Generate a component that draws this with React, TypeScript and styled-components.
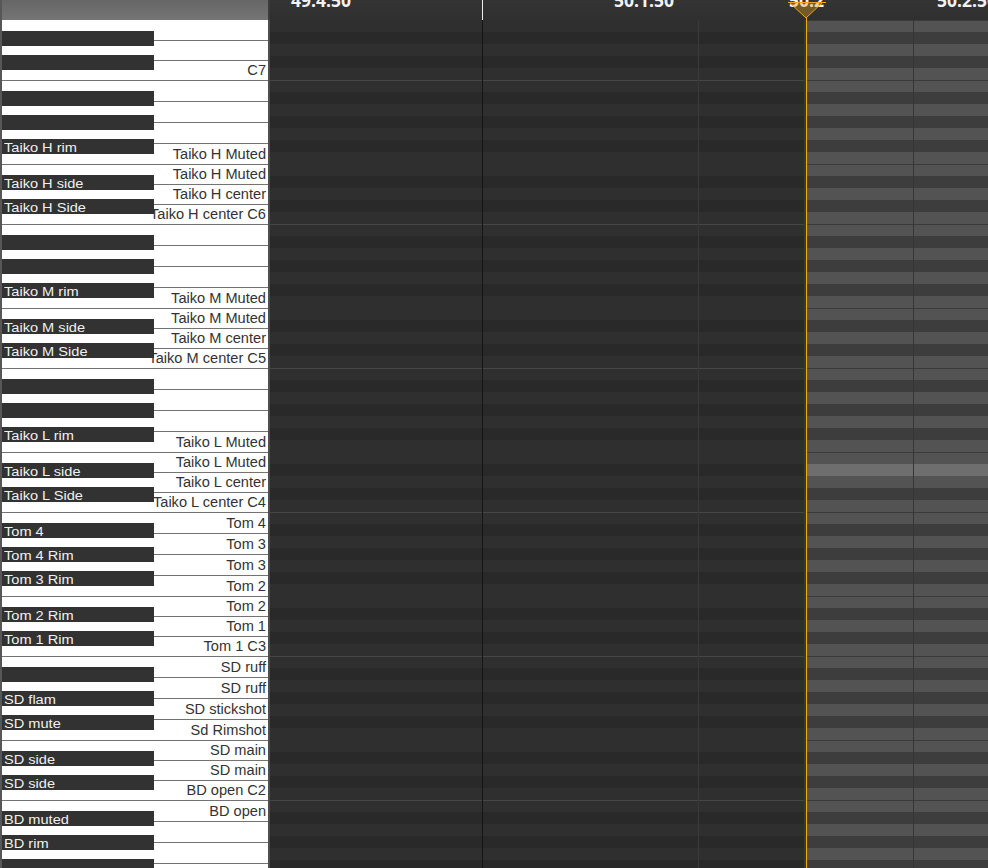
import React from 'react';
import styled, { createGlobalStyle } from 'styled-components';

const GlobalStyle = createGlobalStyle`
  html, body { margin: 0; padding: 0; background: #2d2d2d; overflow: hidden; }
  #root { width: 988px; height: 868px; }
`;

const TOP_NOTE = 100; // E7
const LOWEST_NOTE = 29; // F1
const ROW_COUNT = 71;
const BLACK_PCS = new Set([1, 3, 6, 8, 10]);
const isBlack = (n: number) => BLACK_PCS.has(n % 12);
const WHITE_HEIGHTS: Record<number, number> = { 11: 21, 9: 21, 7: 21, 5: 21, 4: 20, 2: 20, 0: 20 };
const HIGHLIGHT_NOTE = 63;

const LABELS: Record<number, string> = {
  96: 'C7',
  90: 'Taiko H rim', 89: 'Taiko H Muted', 88: 'Taiko H Muted', 87: 'Taiko H side',
  86: 'Taiko H center', 85: 'Taiko H Side', 84: 'Taiko H center C6',
  78: 'Taiko M rim', 77: 'Taiko M Muted', 76: 'Taiko M Muted', 75: 'Taiko M side',
  74: 'Taiko M center', 73: 'Taiko M Side', 72: 'Taiko M center C5',
  66: 'Taiko L rim', 65: 'Taiko L Muted', 64: 'Taiko L Muted', 63: 'Taiko L side',
  62: 'Taiko L center', 61: 'Taiko L Side', 60: 'Taiko L center C4',
  59: 'Tom 4', 58: 'Tom 4', 57: 'Tom 3', 56: 'Tom 4 Rim', 55: 'Tom 3', 54: 'Tom 3 Rim',
  53: 'Tom 2', 52: 'Tom 2', 51: 'Tom 2 Rim', 50: 'Tom 1', 49: 'Tom 1 Rim', 48: 'Tom 1 C3',
  47: 'SD ruff', 45: 'SD ruff', 44: 'SD flam', 43: 'SD stickshot', 42: 'SD mute',
  41: 'Sd Rimshot', 40: 'SD main', 39: 'SD side', 38: 'SD main', 37: 'SD side', 36: 'BD open C2',
  35: 'BD open', 34: 'BD muted', 32: 'BD rim',
};

const RULER_LABELS = [
  { x: 21, text: '49.4.50' },
  { x: 344, text: '50.1.50' },
  { x: 519, text: '50.2' },
  { x: 667, text: '50.2.50' },
];

const Root = styled.div`
  width: 988px;
  height: 868px;
  overflow: hidden;
  display: grid;
  grid-template-columns: 270px 1fr;
  grid-template-rows: 20px 1fr;
  background: #2d2d2d;
  font-family: "Liberation Sans", Arial, sans-serif;
`;

const KeyboardHeader = styled.div`
  border-left: 2px solid #575757;
  border-right: 2px solid #3a3a3a;
  background: linear-gradient(#666666, #757575);
`;

const Ruler = styled.div`
  position: relative;
  overflow: hidden;
  background: linear-gradient(#343434, #2f2f2f);
`;

const RulerLabel = styled.span<{ $x: number }>`
  position: absolute;
  left: ${(p) => p.$x}px;
  top: -8px;
  font-family: "Open Sans", "Liberation Sans", sans-serif;
  font-weight: 700;
  font-size: 17.5px;
  line-height: 17.5px;
  color: #f2f2f2;
  white-space: nowrap;
`;

const BarTick = styled.div<{ $x: number }>`
  position: absolute;
  left: ${(p) => p.$x}px;
  top: 0;
  bottom: 0;
  width: 1px;
  background: #eeeeee;
`;

const PlayheadMarker = styled.svg`
  position: absolute;
  left: 516px;
  top: 0;
  width: 40px;
  height: 20px;
`;

const Keyboard = styled.div`
  position: relative;
  overflow: hidden;
  border-left: 2px solid #575757;
  border-right: 2px solid #4e4e4e;
  background: #ffffff;
  display: flex;
  flex-direction: column;
`;

const WhiteKey = styled.div<{ $h: number; $first: boolean }>`
  flex: 0 0 ${(p) => p.$h}px;
  box-sizing: border-box;
  border-top: ${(p) => (p.$first ? 'none' : '1px solid #737373')};
  display: flex;
  align-items: center;
  justify-content: flex-end;
  padding-right: 2px;
  background: #ffffff;
`;

const WhiteLabel = styled.span`
  font-size: 14.6px;
  line-height: 1;
  color: #333333;
  white-space: nowrap;
  transform: scaleY(1.06);
`;

const BlackKey = styled.div<{ $top: number }>`
  position: absolute;
  left: 0;
  top: ${(p) => p.$top}px;
  width: 152px;
  height: 15px;
  box-sizing: border-box;
  padding: 3px 0 0 2px;
  background: #323232;
  display: flex;
  align-items: center;
`;

const BlackLabel = styled.span`
  font-size: 14.6px;
  line-height: 1;
  color: #f0f0f0;
  white-space: nowrap;
  transform: scaleY(0.87);
`;

const NoteGrid = styled.div`
  position: relative;
  overflow: hidden;
  display: flex;
  flex-direction: column;
`;

const Lane = styled.div`
  flex: 0 0 12px;
  display: flex;
`;

const PastCell = styled.div<{ $black: boolean; $octave: boolean }>`
  width: 534px;
  box-sizing: border-box;
  background: ${(p) => (p.$black ? '#292929' : '#2f2f2f')};
  border-top: ${(p) => (p.$octave ? '1px solid #464646' : 'none')};
`;

const LaneDivider = styled.div`
  width: 2px;
  background: #383838;
`;

const ClipCell = styled.div<{ $tone: 'white' | 'black' | 'hi'; $sep: boolean }>`
  flex: 1;
  box-sizing: border-box;
  background: ${(p) => (p.$tone === 'hi' ? '#6e6e6e' : p.$tone === 'black' ? '#3d3d3d' : '#535353')};
  border-top: ${(p) => (p.$sep ? '1px solid #3a3a3a' : 'none')};
`;

const GridLine = styled.div<{ $x: number; $color: string }>`
  position: absolute;
  left: ${(p) => p.$x}px;
  top: 0;
  bottom: 0;
  width: 1px;
  background: ${(p) => p.$color};
`;

export default function App() {
  const whites: number[] = [];
  const blacks: number[] = [];
  for (let n = TOP_NOTE; n >= LOWEST_NOTE; n--) {
    if (isBlack(n)) blacks.push(n);
    else whites.push(n);
  }
  const rows = Array.from({ length: ROW_COUNT }, (_, i) => TOP_NOTE - i);

  return (
    <>
      <GlobalStyle />
      <Root>
        <KeyboardHeader />
        <Ruler>
          {RULER_LABELS.map((l) => (
            <RulerLabel key={l.text} $x={l.x}>{l.text}</RulerLabel>
          ))}
          <BarTick $x={212} />
          <PlayheadMarker viewBox="0 0 40 20">
            <polygon points="3.5,2.5 36.5,2.5 20,18" fill="rgba(226,160,20,0.38)" stroke="#f0a21a" strokeWidth="1" />
            <line x1="2" y1="2.5" x2="40" y2="2.5" stroke="#f0a21a" strokeWidth="1" />
            <line x1="20.5" y1="18" x2="20.5" y2="20" stroke="#f5a800" strokeWidth="1" />
          </PlayheadMarker>
        </Ruler>
        <Keyboard>
          {whites.map((n, i) => (
            <WhiteKey key={n} $h={WHITE_HEIGHTS[n % 12]} $first={i === 0}>
              {LABELS[n] && <WhiteLabel>{LABELS[n]}</WhiteLabel>}
            </WhiteKey>
          ))}
          {blacks.map((n) => (
            <BlackKey key={n} $top={(TOP_NOTE - n) * 12 - 1}>
              {LABELS[n] && <BlackLabel>{LABELS[n]}</BlackLabel>}
            </BlackKey>
          ))}
        </Keyboard>
        <NoteGrid>
          {rows.map((n) => {
            const pc = n % 12;
            const black = isBlack(n);
            return (
              <Lane key={n}>
                <PastCell $black={black} $octave={pc === 11} />
                <LaneDivider />
                <ClipCell
                  $tone={n === HIGHLIGHT_NOTE ? 'hi' : black ? 'black' : 'white'}
                  $sep={pc === 11 || pc === 4}
                />
              </Lane>
            );
          })}
          <GridLine $x={212} $color="#151515" />
          <GridLine $x={428} $color="#3a3a3a" />
          <GridLine $x={643} $color="#363636" />
          <GridLine $x={536} $color="#f5a800" />
        </NoteGrid>
      </Root>
    </>
  );
}
